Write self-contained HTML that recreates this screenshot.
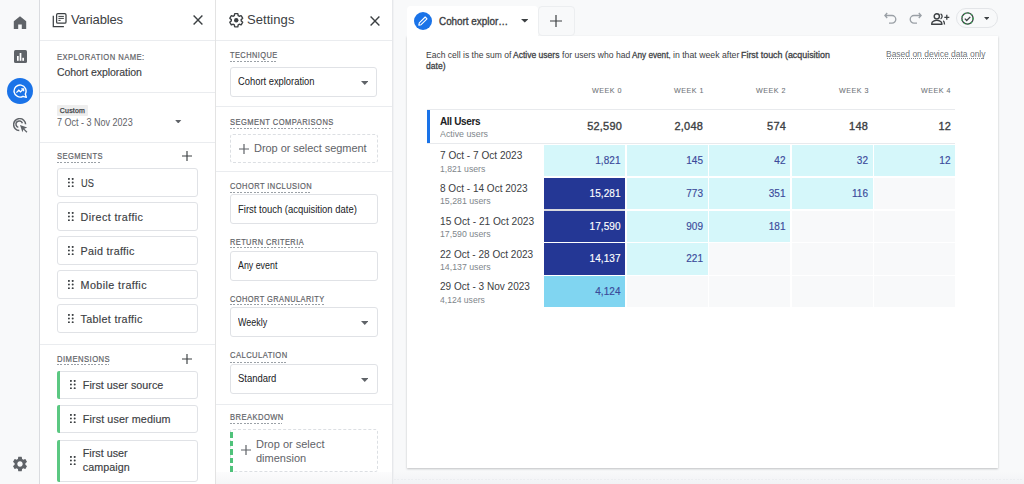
<!DOCTYPE html>
<html><head><meta charset="utf-8">
<style>
*{box-sizing:border-box;margin:0;padding:0}
html,body{width:1024px;height:484px;overflow:hidden;background:#f8f9fa;font-family:"Liberation Sans",sans-serif;color:#3c4043}
.a{position:absolute}
.t{position:absolute;white-space:nowrap;line-height:1}
.hsep{position:absolute;height:1px;background:#eaecef}
.lbl{position:absolute;white-space:nowrap;line-height:1;font-size:8.5px;font-weight:400;color:#5f6368;-webkit-text-stroke:0.2px #5f6368;letter-spacing:0.5px;transform-origin:0 0}
.ul{position:absolute;height:1px;background:repeating-linear-gradient(90deg,#9aa0a6 0 2px,transparent 2px 3.4px)}
.box{position:absolute;border:1px solid #e0e2e6;border-radius:3px;background:#fff}
.dbox{position:absolute;border:1px dashed #dcdfe3;border-radius:3px;background:#fff}
.itm{position:absolute;white-space:nowrap;line-height:1;font-size:10.75px;color:#3c4043;-webkit-text-stroke:0.15px #3c4043}
.green{position:absolute;width:3px;background:#5bc882;border-radius:2px 0 0 2px}
.cell{position:absolute;width:81px;height:31.25px;font-size:10px;text-align:right;padding-right:4.5px;line-height:31px;color:#3b4a9a;letter-spacing:0.05px;-webkit-text-stroke:0.15px currentColor}
.c1{background:#d5f7fa}
.c2{background:#243795;color:#fff}
.c3{background:#80d5f1}
.c0{background:#f8f9fa}
.wk{position:absolute;white-space:nowrap;line-height:1;font-size:8px;color:#70757a;-webkit-text-stroke:0.1px #70757a;letter-spacing:0.6px;text-align:right;width:60px;transform-origin:100% 0;transform:scaleX(0.89)}
.num{position:absolute;white-space:nowrap;line-height:1;font-size:11.25px;color:#3c4043;-webkit-text-stroke:0.35px #3c4043;letter-spacing:0.2px;text-align:right;width:60px;transform-origin:100% 0;transform:scaleX(0.975)}
.rl{position:absolute;white-space:nowrap;line-height:1;font-size:11px;color:#3c4043;transform-origin:0 0}
.rs{position:absolute;white-space:nowrap;line-height:1;font-size:9px;color:#80868b;transform-origin:0 0}
.sv{position:absolute;white-space:nowrap;line-height:1;font-size:10.25px;color:#202124;transform-origin:0 0}
</style></head><body>
<div class="a" style="left:0;top:0;width:40px;height:484px;background:#f8f9fa;border-right:1px solid #dadce0"></div>
<svg class="a" style="left:13px;top:15px" width="14" height="14" viewBox="0 0 14 14"><path d="M7 1.2 L13.2 6.2 V14 H8.8 V9.5 H5.2 V14 H0.8 V6.2 Z" fill="#5f6368"/></svg>
<svg class="a" style="left:14px;top:50px" width="13" height="13" viewBox="0 0 13 13"><rect x="0" y="0" width="13" height="13" rx="1.5" fill="#5f6368"/><rect x="3" y="6" width="1.7" height="4.8" fill="#fff"/><rect x="5.65" y="3" width="1.7" height="7.8" fill="#fff"/><rect x="8.3" y="7.8" width="1.7" height="3" fill="#fff"/></svg>
<div class="a" style="left:7px;top:78px;width:26px;height:26px;border-radius:50%;background:#1a73e8"></div>
<svg class="a" style="left:13px;top:84px" width="14" height="14" viewBox="0 0 14 14"><path d="M12.3 10 A6 6 0 1 0 10 12.3 L13.3 13.3 Z" fill="none" stroke="#fff" stroke-width="1.4" stroke-linejoin="round"/><path d="M3.4 8.6 L5.8 6.2 L7.5 7.9 L10.2 5.2" fill="none" stroke="#fff" stroke-width="1.3"/><path d="M8.2 4.8 H10.6 V7.2" fill="none" stroke="#fff" stroke-width="1.3"/></svg>
<svg class="a" style="left:13px;top:118px" width="15" height="15" viewBox="0 0 15 15"><path d="M6.3 12.6 A6 6 0 1 1 12.6 6.3" fill="none" stroke="#5f6368" stroke-width="1.5"/><path d="M5.3 9.4 A3.3 3.3 0 1 1 9.4 5.3" fill="none" stroke="#5f6368" stroke-width="1.5"/><path d="M7 7 L14.2 9.6 L11.3 10.7 L14.4 13.8 L13.5 14.7 L10.4 11.6 L9.4 14.3 Z" fill="#5f6368"/></svg>
<svg class="a" style="left:11px;top:455px" width="18" height="18" viewBox="0 0 24 24"><path fill="#5f6368" d="M19.14 12.94c.04-.3.06-.61.06-.94 0-.32-.02-.64-.07-.94l2.03-1.58a.49.49 0 0 0 .12-.61l-1.92-3.32a.49.49 0 0 0-.59-.22l-2.39.96c-.5-.38-1.03-.7-1.62-.94l-.36-2.54a.48.48 0 0 0-.48-.41h-3.84c-.24 0-.43.17-.47.41l-.36 2.54c-.59.24-1.13.57-1.62.94l-2.39-.96a.49.49 0 0 0-.59.22L2.74 8.87c-.12.21-.08.47.12.61l2.03 1.58c-.05.3-.09.63-.09.94s.02.64.07.94l-2.03 1.58a.49.49 0 0 0-.12.61l1.92 3.32c.12.22.37.29.59.22l2.39-.96c.5.38 1.03.7 1.62.94l.36 2.54c.05.24.24.41.48.41h3.84c.24 0 .44-.17.47-.41l.36-2.54c.59-.24 1.13-.56 1.62-.94l2.39.96c.22.08.47 0 .59-.22l1.92-3.32c.12-.22.07-.47-.12-.61l-2.01-1.58zM12 15.6c-1.98 0-3.6-1.62-3.6-3.6s1.62-3.6 3.6-3.6 3.6 1.62 3.6 3.6-1.62 3.6-3.6 3.6z"/></svg>
<div class="a" style="left:40px;top:0;width:176px;height:484px;background:#fff;border-right:1px solid #e3e3e3"></div>
<svg class="a" style="left:52px;top:12px" width="16" height="16" viewBox="0 0 16 16"><path d="M1.3 3.7 V14.5 H11.9" fill="none" stroke="#3c4043" stroke-width="1.25"/><rect x="4.6" y="1.6" width="9.4" height="9.6" rx="1.3" fill="none" stroke="#3c4043" stroke-width="1.25"/><path d="M6.4 4.4 H11.9 M6.4 6.4 H11.9 M6.4 8.4 H8.6" stroke="#3c4043" stroke-width="1"/></svg>
<div class="t" style="left:71px;top:13px;font-size:13px;color:#3c4043;letter-spacing:-0.15px">Variables</div>
<svg class="a" style="left:193px;top:15px" width="10" height="10" viewBox="0 0 10 10"><path d="M0.6 0.6 L9.4 9.4 M9.4 0.6 L0.6 9.4" stroke="#3c4043" stroke-width="1.4"/></svg>
<div class="hsep" style="left:40px;top:40px;width:175px"></div>
<div class="lbl" style="left:57px;top:52.85px;transform:scaleX(0.8979)">EXPLORATION NAME:</div>
<div class="itm" style="left:57px;top:67px;font-size:10.5px;letter-spacing:-0.06px">Cohort exploration</div>
<div class="hsep" style="left:40px;top:92px;width:175px"></div>
<div class="a" style="left:57px;top:105px;width:31px;height:11px;background:#eeeeee;border-radius:1px"></div>
<div class="t" style="left:59.8px;top:106.6px;font-size:7px;color:#3c4043;-webkit-text-stroke:0.25px #3c4043;letter-spacing:0.2px">Custom</div>
<div class="t" style="left:57px;top:118.2px;font-size:10px;color:#5f6368;transform-origin:0 0;transform:scaleX(0.9012)">7 Oct - 3 Nov 2023</div>
<svg class="a" style="left:175px;top:119.5px" width="6.5" height="3.5" viewBox="0 0 7 4"><path d="M0 0 H7 L3.5 4 Z" fill="#5f6368"/></svg>
<div class="hsep" style="left:40px;top:142px;width:175px"></div>
<div class="lbl" style="left:57px;top:151.55px;transform:scaleX(0.888)">SEGMENTS</div>
<div class="ul" style="left:57px;top:162px;width:44.4px"></div>
<svg class="a" style="left:182.1px;top:151px" width="10" height="10" viewBox="0 0 10 10"><path d="M5.0 0 V10 M0 5.0 H10" stroke="#3c4043" stroke-width="1.15"/></svg>
<div class="box" style="left:57px;top:168px;width:141px;height:29px"></div>
<svg class="a" style="left:67.5px;top:177.7px" width="6" height="9" viewBox="0 0 6 9"><circle cx="0.9" cy="0.9" r="1.0" fill="#3c4043"/><circle cx="0.9" cy="4.55" r="1.0" fill="#3c4043"/><circle cx="0.9" cy="8.2" r="1.0" fill="#3c4043"/><circle cx="4.7" cy="0.9" r="1.0" fill="#3c4043"/><circle cx="4.7" cy="4.55" r="1.0" fill="#3c4043"/><circle cx="4.7" cy="8.2" r="1.0" fill="#3c4043"/></svg>
<div class="itm" style="left:80.6px;top:177.8px;letter-spacing:0px;transform-origin:0 0;transform:scaleX(0.86)">US</div>
<div class="box" style="left:57px;top:202px;width:141px;height:29px"></div>
<svg class="a" style="left:67.5px;top:211.7px" width="6" height="9" viewBox="0 0 6 9"><circle cx="0.9" cy="0.9" r="1.0" fill="#3c4043"/><circle cx="0.9" cy="4.55" r="1.0" fill="#3c4043"/><circle cx="0.9" cy="8.2" r="1.0" fill="#3c4043"/><circle cx="4.7" cy="0.9" r="1.0" fill="#3c4043"/><circle cx="4.7" cy="4.55" r="1.0" fill="#3c4043"/><circle cx="4.7" cy="8.2" r="1.0" fill="#3c4043"/></svg>
<div class="itm" style="left:80.6px;top:211.8px;letter-spacing:0.4px">Direct traffic</div>
<div class="box" style="left:57px;top:236px;width:141px;height:29px"></div>
<svg class="a" style="left:67.5px;top:245.7px" width="6" height="9" viewBox="0 0 6 9"><circle cx="0.9" cy="0.9" r="1.0" fill="#3c4043"/><circle cx="0.9" cy="4.55" r="1.0" fill="#3c4043"/><circle cx="0.9" cy="8.2" r="1.0" fill="#3c4043"/><circle cx="4.7" cy="0.9" r="1.0" fill="#3c4043"/><circle cx="4.7" cy="4.55" r="1.0" fill="#3c4043"/><circle cx="4.7" cy="8.2" r="1.0" fill="#3c4043"/></svg>
<div class="itm" style="left:80.6px;top:245.8px;letter-spacing:0.29px">Paid traffic</div>
<div class="box" style="left:57px;top:270px;width:141px;height:29px"></div>
<svg class="a" style="left:67.5px;top:279.7px" width="6" height="9" viewBox="0 0 6 9"><circle cx="0.9" cy="0.9" r="1.0" fill="#3c4043"/><circle cx="0.9" cy="4.55" r="1.0" fill="#3c4043"/><circle cx="0.9" cy="8.2" r="1.0" fill="#3c4043"/><circle cx="4.7" cy="0.9" r="1.0" fill="#3c4043"/><circle cx="4.7" cy="4.55" r="1.0" fill="#3c4043"/><circle cx="4.7" cy="8.2" r="1.0" fill="#3c4043"/></svg>
<div class="itm" style="left:80.6px;top:279.8px;letter-spacing:0.4px">Mobile traffic</div>
<div class="box" style="left:57px;top:304px;width:141px;height:29px"></div>
<svg class="a" style="left:67.5px;top:313.7px" width="6" height="9" viewBox="0 0 6 9"><circle cx="0.9" cy="0.9" r="1.0" fill="#3c4043"/><circle cx="0.9" cy="4.55" r="1.0" fill="#3c4043"/><circle cx="0.9" cy="8.2" r="1.0" fill="#3c4043"/><circle cx="4.7" cy="0.9" r="1.0" fill="#3c4043"/><circle cx="4.7" cy="4.55" r="1.0" fill="#3c4043"/><circle cx="4.7" cy="8.2" r="1.0" fill="#3c4043"/></svg>
<div class="itm" style="left:80.6px;top:313.8px;letter-spacing:0.31px">Tablet traffic</div>
<div class="hsep" style="left:40px;top:344px;width:175px"></div>
<div class="lbl" style="left:57px;top:354.55px;transform:scaleX(0.9035)">DIMENSIONS</div>
<div class="ul" style="left:57px;top:364px;width:51.5px"></div>
<svg class="a" style="left:182.1px;top:354px" width="10" height="10" viewBox="0 0 10 10"><path d="M5.0 0 V10 M0 5.0 H10" stroke="#3c4043" stroke-width="1.15"/></svg>
<div class="box" style="left:57px;top:371px;width:141px;height:28px"></div>
<div class="green" style="left:57px;top:371px;height:28px"></div>
<svg class="a" style="left:69.5px;top:380.2px" width="6" height="9" viewBox="0 0 6 9"><circle cx="0.9" cy="0.9" r="1.0" fill="#3c4043"/><circle cx="0.9" cy="4.55" r="1.0" fill="#3c4043"/><circle cx="0.9" cy="8.2" r="1.0" fill="#3c4043"/><circle cx="4.7" cy="0.9" r="1.0" fill="#3c4043"/><circle cx="4.7" cy="4.55" r="1.0" fill="#3c4043"/><circle cx="4.7" cy="8.2" r="1.0" fill="#3c4043"/></svg>
<div class="itm" style="left:82.8px;top:380px;letter-spacing:0.03px">First user source</div>
<div class="box" style="left:57px;top:405px;width:141px;height:28px"></div>
<div class="green" style="left:57px;top:405px;height:28px"></div>
<svg class="a" style="left:69.5px;top:414.2px" width="6" height="9" viewBox="0 0 6 9"><circle cx="0.9" cy="0.9" r="1.0" fill="#3c4043"/><circle cx="0.9" cy="4.55" r="1.0" fill="#3c4043"/><circle cx="0.9" cy="8.2" r="1.0" fill="#3c4043"/><circle cx="4.7" cy="0.9" r="1.0" fill="#3c4043"/><circle cx="4.7" cy="4.55" r="1.0" fill="#3c4043"/><circle cx="4.7" cy="8.2" r="1.0" fill="#3c4043"/></svg>
<div class="itm" style="left:82.8px;top:414px;letter-spacing:0.11px">First user medium</div>
<div class="box" style="left:57px;top:439.5px;width:141px;height:42px"></div>
<div class="green" style="left:57px;top:439.5px;height:42px"></div>
<svg class="a" style="left:69.5px;top:455.5px" width="6" height="9" viewBox="0 0 6 9"><circle cx="0.9" cy="0.9" r="1.0" fill="#3c4043"/><circle cx="0.9" cy="4.55" r="1.0" fill="#3c4043"/><circle cx="0.9" cy="8.2" r="1.0" fill="#3c4043"/><circle cx="4.7" cy="0.9" r="1.0" fill="#3c4043"/><circle cx="4.7" cy="4.55" r="1.0" fill="#3c4043"/><circle cx="4.7" cy="8.2" r="1.0" fill="#3c4043"/></svg>
<div class="itm" style="left:82.8px;top:448.1px;letter-spacing:0.01px">First user</div>
<div class="itm" style="left:82.8px;top:462.1px;letter-spacing:0.04px">campaign</div>
<div class="a" style="left:216px;top:0;width:177px;height:484px;background:#fff;border-right:1px solid #e6e8eb;box-shadow:1px 0 0 #f1f2f4"></div>
<svg class="a" style="left:227.75px;top:11.6px" width="16.5" height="16.5" viewBox="0 0 24 24"><path fill="none" stroke="#3c4043" stroke-width="2" stroke-linejoin="round" d="M19.14 12.94c.04-.3.06-.61.06-.94 0-.32-.02-.64-.07-.94l2.03-1.58a.49.49 0 0 0 .12-.61l-1.92-3.32a.49.49 0 0 0-.59-.22l-2.39.96c-.5-.38-1.03-.7-1.62-.94l-.36-2.54a.48.48 0 0 0-.48-.41h-3.84c-.24 0-.43.17-.47.41l-.36 2.54c-.59.24-1.13.57-1.62.94l-2.39-.96a.49.49 0 0 0-.59.22L2.74 8.87c-.12.21-.08.47.12.61l2.03 1.58c-.05.3-.09.63-.09.94s.02.64.07.94l-2.03 1.58a.49.49 0 0 0-.12.61l1.92 3.32c.12.22.37.29.59.22l2.39-.96c.5.38 1.03.7 1.62.94l.36 2.54c.05.24.24.41.48.41h3.84c.24 0 .44-.17.47-.41l.36-2.54c.59-.24 1.13-.56 1.62-.94l2.39.96c.22.08.47 0 .59-.22l1.92-3.32c.12-.22.07-.47-.12-.61l-2.01-1.58z"/><circle cx="12" cy="12" r="3.2" fill="#3c4043"/></svg>
<div class="t" style="left:247px;top:13px;font-size:13px;color:#3c4043;letter-spacing:0.06px">Settings</div>
<svg class="a" style="left:370px;top:15.5px" width="10" height="10" viewBox="0 0 10 10"><path d="M0.6 0.6 L9.4 9.4 M9.4 0.6 L0.6 9.4" stroke="#3c4043" stroke-width="1.4"/></svg>
<div class="hsep" style="left:216px;top:40px;width:176px"></div>
<div class="lbl" style="left:230.3px;top:50.95px;transform:scaleX(0.8741)">TECHNIQUE</div>
<div class="ul" style="left:230.3px;top:61px;width:47.2px"></div>
<div class="box" style="left:230px;top:67px;width:147px;height:30px"></div>
<div class="sv" style="left:237.5px;top:77.3px;transform:scaleX(0.9133)">Cohort exploration</div>
<svg class="a" style="left:360.5px;top:81px" width="7.5" height="4" viewBox="0 0 7 4" preserveAspectRatio="none"><path d="M0 0 H7 L3.5 4 Z" fill="#5f6368"/></svg>
<div class="hsep" style="left:216px;top:106px;width:176px"></div>
<div class="lbl" style="left:230.3px;top:118.25px;transform:scaleX(0.8878)">SEGMENT COMPARISONS</div>
<div class="ul" style="left:230.3px;top:127.7px;width:102.1px"></div>
<div class="dbox" style="left:230px;top:134px;width:147.5px;height:29px"></div>
<svg class="a" style="left:238.5px;top:143.5px" width="10" height="10" viewBox="0 0 10 10"><path d="M5.0 0 V10 M0 5.0 H10" stroke="#5f6368" stroke-width="1.2"/></svg>
<div class="t" style="left:254px;top:143px;font-size:11px;color:#5f6368;letter-spacing:-0.05px">Drop or select segment</div>
<div class="hsep" style="left:216px;top:171px;width:176px"></div>
<div class="lbl" style="left:230.3px;top:181.55px;transform:scaleX(0.8804)">COHORT INCLUSION</div>
<div class="ul" style="left:230.3px;top:191.7px;width:81px"></div>
<div class="box" style="left:230px;top:194px;width:147.5px;height:30px"></div>
<div class="sv" style="left:237.5px;top:204.6px;transform:scaleX(0.9228)">First touch (acquisition date)</div>
<div class="lbl" style="left:230.3px;top:238.05px;transform:scaleX(0.8714)">RETURN CRITERIA</div>
<div class="ul" style="left:230.3px;top:247.3px;width:73.2px"></div>
<div class="box" style="left:230px;top:251px;width:147.5px;height:30px"></div>
<div class="sv" style="left:237.5px;top:261.1px;transform:scaleX(0.863)">Any event</div>
<div class="lbl" style="left:230.3px;top:294.55px;transform:scaleX(0.8731)">COHORT GRANULARITY</div>
<div class="ul" style="left:230.3px;top:304.2px;width:94.3px"></div>
<div class="box" style="left:230px;top:307px;width:147.5px;height:30px"></div>
<div class="sv" style="left:237.5px;top:317.8px;transform:scaleX(0.8727)">Weekly</div>
<svg class="a" style="left:360.5px;top:321.2px" width="7.5" height="4" viewBox="0 0 7 4" preserveAspectRatio="none"><path d="M0 0 H7 L3.5 4 Z" fill="#5f6368"/></svg>
<div class="lbl" style="left:230.3px;top:350.95px;transform:scaleX(0.8953)">CALCULATION</div>
<div class="ul" style="left:230.3px;top:361.6px;width:57.3px"></div>
<div class="box" style="left:230px;top:364px;width:147.5px;height:30px"></div>
<div class="sv" style="left:237.5px;top:374.2px;transform:scaleX(0.9225)">Standard</div>
<svg class="a" style="left:360.5px;top:378px" width="7.5" height="4" viewBox="0 0 7 4" preserveAspectRatio="none"><path d="M0 0 H7 L3.5 4 Z" fill="#5f6368"/></svg>
<div class="hsep" style="left:216px;top:404px;width:176px"></div>
<div class="lbl" style="left:230.3px;top:413.35px;transform:scaleX(0.8931)">BREAKDOWN</div>
<div class="ul" style="left:230.3px;top:422.9px;width:51.8px"></div>
<div class="dbox" style="left:230px;top:429px;width:147.5px;height:43px"></div>
<div class="a" style="left:230px;top:432px;width:2.6px;height:40px;background:repeating-linear-gradient(180deg,#4fc27a 0 5.5px,transparent 5.5px 8.6px)"></div>
<svg class="a" style="left:241px;top:445px" width="10" height="10" viewBox="0 0 10 10"><path d="M5.0 0 V10 M0 5.0 H10" stroke="#5f6368" stroke-width="1.2"/></svg>
<div class="t" style="left:256px;top:439px;font-size:11px;color:#5f6368">Drop or select</div>
<div class="t" style="left:256px;top:453px;font-size:11px;color:#5f6368">dimension</div>
<div class="a" style="left:407px;top:36px;width:591px;height:432px;background:#fff;box-shadow:0 1px 2px rgba(60,64,67,.3)"></div>
<div class="a" style="left:407px;top:6px;width:131px;height:32px;background:#fff;border-radius:4px 4px 0 0"></div>
<div class="a" style="left:538px;top:5.5px;width:36.5px;height:30.5px;background:#f8f9fa;border:1px solid #eceef0;border-radius:4px"></div>
<svg class="a" style="left:550.1px;top:15.4px" width="12" height="12" viewBox="0 0 12 12"><path d="M6.0 0 V12 M0 6.0 H12" stroke="#3c4043" stroke-width="1.2"/></svg>
<div class="a" style="left:414px;top:12px;width:18px;height:18px;border-radius:50%;background:#1a73e8"></div>
<svg class="a" style="left:417px;top:15px" width="12" height="12" viewBox="0 0 12 12"><path d="M1.8 10.2 L2.3 7.9 L8.2 2 L10 3.8 L4.1 9.7 Z" fill="none" stroke="#fff" stroke-width="1.1" stroke-linejoin="round"/></svg>
<div class="t" style="left:439px;top:15.5px;font-size:10.5px;font-weight:400;color:#3c4043;-webkit-text-stroke:0.35px #3c4043;transform-origin:0 0;transform:scaleX(0.9397)">Cohort explor…</div>
<svg class="a" style="left:520.5px;top:19.2px" width="7.5" height="3.5" viewBox="0 0 7 4" preserveAspectRatio="none"><path d="M0 0 H7 L3.5 4 Z" fill="#3c4043"/></svg>
<svg class="a" style="left:884px;top:12px" width="13" height="12" viewBox="0 0 13 12"><path d="M3.2 1 L0.9 3.5 L3.2 6 M1 3.5 H8 A3.8 3.8 0 0 1 8 11.1 H5" fill="none" stroke="#9aa0a6" stroke-width="1.3"/></svg>
<svg class="a" style="left:909px;top:12px" width="13" height="12" viewBox="0 0 13 12"><path d="M9.8 1 L12.1 3.5 L9.8 6 M12 3.5 H5 A3.8 3.8 0 0 0 5 11.1 H8" fill="none" stroke="#9aa0a6" stroke-width="1.3"/></svg>
<svg class="a" style="left:930.5px;top:12.5px" width="19" height="12" viewBox="0 0 19 12"><circle cx="5.8" cy="3.3" r="2.6" fill="none" stroke="#3c4043" stroke-width="1.4"/><path d="M0.8 11.3 V10.3 C0.8 8.3 4 7.3 5.8 7.3 C7.6 7.3 10.8 8.3 10.8 10.3 V11.3 Z" fill="none" stroke="#3c4043" stroke-width="1.4"/><path d="M9.6 0.8 A2.8 2.8 0 0 1 9.6 5.8 M12.2 7.8 C13.2 8.5 13.5 9.8 13.5 11.5" fill="none" stroke="#3c4043" stroke-width="1.3"/><path d="M15.8 1.8 V6.8 M13.3 4.3 H18.3" stroke="#3c4043" stroke-width="1.3"/></svg>
<div class="a" style="left:956px;top:8px;width:42px;height:20px;border:1px solid #e3e5e8;border-radius:10px"></div>
<svg class="a" style="left:961px;top:11.5px" width="13" height="13" viewBox="0 0 13 13"><circle cx="6.5" cy="6.5" r="5.6" fill="none" stroke="#3c4043" stroke-width="1.3"/><circle cx="6.5" cy="6.5" r="5.6" fill="none" stroke="#34a853" stroke-width="1.3" stroke-dasharray="1.2 2.5"/><path d="M3.8 6.6 L5.7 8.5 L9.3 4.9" fill="none" stroke="#3c4043" stroke-width="1.3"/></svg>
<svg class="a" style="left:983.5px;top:16.5px" width="5.5" height="3" viewBox="0 0 7 4" preserveAspectRatio="none"><path d="M0 0 H7 L3.5 4 Z" fill="#3c4043"/></svg>
<div class="t" style="left:425.5px;top:49.6px;font-size:9.5px;color:#3c4043;transform-origin:0 0;transform:scaleX(0.8989)">Each cell is the sum of</div>
<div class="t" style="left:512.5px;top:49.6px;font-size:9.5px;color:#3c4043;-webkit-text-stroke:0.3px #3c4043;transform-origin:0 0;transform:scaleX(0.8981)">Active users</div>
<div class="t" style="left:561.5px;top:49.6px;font-size:9.5px;color:#3c4043;transform-origin:0 0;transform:scaleX(0.904)">for users who had</div>
<div class="t" style="left:632px;top:49.6px;font-size:9.5px;color:#3c4043;-webkit-text-stroke:0.3px #3c4043;transform-origin:0 0;transform:scaleX(0.8619)">Any event</div>
<div class="t" style="left:668.3px;top:49.6px;font-size:9.5px;color:#3c4043;transform-origin:0 0;transform:scaleX(1)">,</div>
<div class="t" style="left:673.3px;top:49.6px;font-size:9.5px;color:#3c4043;transform-origin:0 0;transform:scaleX(0.9169)">in that week after</div>
<div class="t" style="left:741px;top:49.6px;font-size:9.5px;color:#3c4043;-webkit-text-stroke:0.3px #3c4043;transform-origin:0 0;transform:scaleX(0.9351)">First touch (acquisition</div>
<div class="t" style="left:425.5px;top:60.6px;font-size:9.5px;color:#3c4043;-webkit-text-stroke:0.3px #3c4043;transform-origin:0 0;transform:scaleX(0.9)">date)</div>
<div class="t" style="left:886px;top:50.2px;font-size:9px;color:#70757a;transform-origin:0 0;transform:scaleX(0.9423)">Based on device data only</div>
<div class="a" style="left:886.5px;top:57.5px;width:98px;height:1px;background:repeating-linear-gradient(90deg,#80868b 0 1px,transparent 1px 2px)"></div>
<div class="wk" style="left:562.05px;top:87px">WEEK 0</div>
<div class="wk" style="left:643.65px;top:87px">WEEK 1</div>
<div class="wk" style="left:726.05px;top:87px">WEEK 2</div>
<div class="wk" style="left:808.55px;top:87px">WEEK 3</div>
<div class="wk" style="left:891.05px;top:87px">WEEK 4</div>
<div class="a" style="left:427px;top:109px;width:528px;height:1px;background:#e8eaed"></div>
<div class="a" style="left:427px;top:143px;width:528px;height:1px;background:#e8eaed"></div>
<div class="a" style="left:427px;top:109.5px;width:3px;height:33.5px;background:#1a73e8"></div>
<div class="t" style="left:440px;top:117px;font-size:10px;font-weight:700;color:#202124;letter-spacing:-0.35px">All Users</div>
<div class="rs" style="left:440px;top:130.3px;transform:scaleX(0.9796)">Active users</div>
<div class="num" style="left:561.7px;top:120.6px">52,590</div>
<div class="num" style="left:643.3000000000001px;top:120.6px">2,048</div>
<div class="num" style="left:725.7px;top:120.6px">574</div>
<div class="num" style="left:808.2px;top:120.6px">148</div>
<div class="num" style="left:890.7px;top:120.6px">12</div>
<div class="rl" style="left:439.5px;top:150.40px;transform:scaleX(0.9157)">7 Oct - 7 Oct 2023</div>
<div class="rs" style="left:439.5px;top:164.60px;transform:scaleX(0.963)">1,821 users</div>
<div class="rl" style="left:439.5px;top:183.15px;transform:scaleX(0.9125)">8 Oct - 14 Oct 2023</div>
<div class="rs" style="left:439.5px;top:197.35px;transform:scaleX(0.9725)">15,281 users</div>
<div class="rl" style="left:439.5px;top:215.90px;transform:scaleX(0.9218)">15 Oct - 21 Oct 2023</div>
<div class="rs" style="left:439.5px;top:230.10px;transform:scaleX(0.9725)">17,590 users</div>
<div class="rl" style="left:439.5px;top:248.65px;transform:scaleX(0.9127)">22 Oct - 28 Oct 2023</div>
<div class="rs" style="left:439.5px;top:262.85px;transform:scaleX(0.9725)">14,137 users</div>
<div class="rl" style="left:439.5px;top:281.40px;transform:scaleX(0.9133)">29 Oct - 3 Nov 2023</div>
<div class="rs" style="left:439.5px;top:295.60px;transform:scaleX(0.9532)">4,124 users</div>
<div class="cell c1" style="left:544px;top:145px">1,821</div>
<div class="cell c1" style="left:626.5px;top:145px">145</div>
<div class="cell c1" style="left:709px;top:145px">42</div>
<div class="cell c1" style="left:791.5px;top:145px">32</div>
<div class="cell c1" style="left:874px;top:145px">12</div>
<div class="cell c2" style="left:544px;top:177.75px">15,281</div>
<div class="cell c1" style="left:626.5px;top:177.75px">773</div>
<div class="cell c1" style="left:709px;top:177.75px">351</div>
<div class="cell c1" style="left:791.5px;top:177.75px">116</div>
<div class="cell c0" style="left:874px;top:177.75px"></div>
<div class="cell c2" style="left:544px;top:210.5px">17,590</div>
<div class="cell c1" style="left:626.5px;top:210.5px">909</div>
<div class="cell c1" style="left:709px;top:210.5px">181</div>
<div class="cell c0" style="left:791.5px;top:210.5px"></div>
<div class="cell c0" style="left:874px;top:210.5px"></div>
<div class="cell c2" style="left:544px;top:243.25px">14,137</div>
<div class="cell c1" style="left:626.5px;top:243.25px">221</div>
<div class="cell c0" style="left:709px;top:243.25px"></div>
<div class="cell c0" style="left:791.5px;top:243.25px"></div>
<div class="cell c0" style="left:874px;top:243.25px"></div>
<div class="cell c3" style="left:544px;top:276px">4,124</div>
<div class="cell c0" style="left:626.5px;top:276px"></div>
<div class="cell c0" style="left:709px;top:276px"></div>
<div class="cell c0" style="left:791.5px;top:276px"></div>
<div class="cell c0" style="left:874px;top:276px"></div>
<div class="a" style="left:216px;top:472px;width:176px;height:12px;background:linear-gradient(#fcfcfd,#f5f6f7)"></div>
<div class="a" style="left:544px;top:209px;width:81px;height:1.5px;background:#d9d9de"></div>
<div class="a" style="left:394px;top:472px;width:630px;height:12px;background:linear-gradient(#f8f9fa,#f2f3f5)"></div>
<div class="a" style="left:394px;top:479px;width:630px;height:1px;background:repeating-linear-gradient(90deg,#eceef1 0 2px,transparent 2px 3.5px)"></div>
</body></html>
